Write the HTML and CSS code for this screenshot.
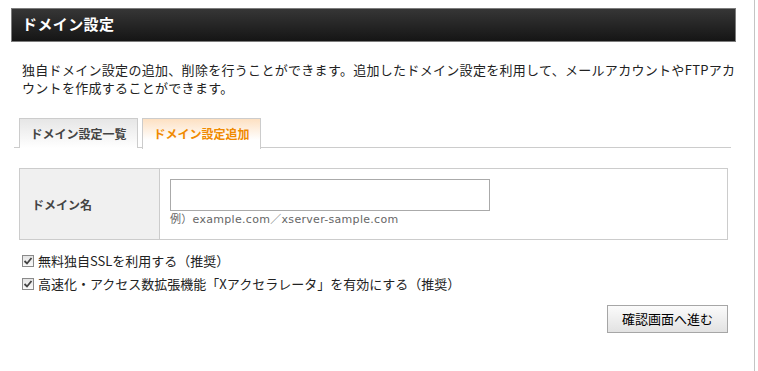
FILE: index.html
```html
<!DOCTYPE html>
<html lang="ja">
<head>
<meta charset="utf-8">
<title>ドメイン設定</title>
<link rel="stylesheet" href="styles.css">
</head>
<body>
<div class="page">
  <h1 class="title">ドメイン設定</h1>
  <p class="desc">独自ドメイン設定の追加、削除を行うことができます。追加したドメイン設定を利用して、メールアカウントやFTPアカウントを作成することができます。</p>
  <div class="tabs">
    <div class="tab">ドメイン設定一覧</div>
    <div class="tab active">ドメイン設定追加</div>
  </div>
  <div class="form">
    <div class="label">ドメイン名</div>
    <div class="field">
      <div class="input"></div>
      <div class="help">例）example.com／xserver-sample.com</div>
    </div>
  </div>
  <div class="checks">
    <div class="check"><span class="box"><svg width="10" height="10" viewBox="0 0 10 10"><path d="M1.5 5 L4 7.5 L8.5 2" fill="none" stroke="#444" stroke-width="1.8"/></svg></span>無料独自SSLを利用する（推奨）</div>
    <div class="check"><span class="box"><svg width="10" height="10" viewBox="0 0 10 10"><path d="M1.5 5 L4 7.5 L8.5 2" fill="none" stroke="#444" stroke-width="1.8"/></svg></span>高速化・アクセス数拡張機能「Xアクセラレータ」を有効にする（推奨）</div>
  </div>
  <div class="actions">
    <button class="btn">確認画面へ進む</button>
  </div>
  <div class="rule"></div>
</div>
</body>
</html>
```
FILE: styles.css
```css
html, body {
  margin: 0;
  padding: 0;
  background: #fff;
}
body {
  font-family: "Noto Sans CJK JP", "Liberation Sans", sans-serif;
  color: #333;
}
.page {
  width: 755px;
  height: 371px;
  box-sizing: border-box;
  border-right: 1px solid #c4c4c4;
  padding-top: 8px;
  overflow: hidden;
}
.title {
  margin: 0 0 0 11px;
  width: 725px;
  height: 34px;
  box-sizing: border-box;
  border: 1px solid #7c7c7c;
  background: linear-gradient(#363636, #151515);
  color: #fff;
  font-size: 15px;
  font-weight: bold;
  line-height: 30px;
  padding-left: 10px;
  letter-spacing: 0.4px;
}
.desc {
  margin: 19px 0 0 22px;
  width: 715px;
  font-size: 13px;
  line-height: 18px;
  letter-spacing: 0.3px;
  color: #222;
}
.tabs {
  margin: 21px 0 0 14px;
  width: 717px;
  height: 30px;
  box-sizing: border-box;
  border-bottom: 1px solid #ccc;
  padding-left: 5px;
  display: flex;
  gap: 4px;
}
.tab {
  width: 119px;
  height: 30px;
  box-sizing: border-box;
  border: 1px solid #ccc;
  border-bottom: none;
  background: linear-gradient(#e6e6e6, #fff);
  font-size: 12px;
  font-weight: bold;
  color: #444;
  text-align: center;
  line-height: 29px;
}
.tab.active {
  height: 31px;
  background: linear-gradient(#fde0c2, #fff 70%);
  color: #f08a00;
}
.form {
  margin: 20px 0 0 19px;
  width: 709px;
  height: 72px;
  box-sizing: border-box;
  border: 1px solid #ccc;
  display: flex;
}
.label {
  width: 140px;
  box-sizing: border-box;
  border-right: 1px solid #ccc;
  background: #f0f0f0;
  font-size: 12px;
  font-weight: bold;
  color: #444;
  padding-left: 12px;
  display: flex;
  align-items: center;
}
.field {
  padding: 10px 0 0 10px;
}
.input {
  width: 320px;
  height: 32px;
  box-sizing: border-box;
  border: 1px solid #aaa;
  background: #fff;
}
.help {
  margin-top: 1px;
  font-family: "DejaVu Sans", "Noto Sans CJK JP", sans-serif;
  font-size: 11px;
  line-height: 16px;
  letter-spacing: 0.3px;
  color: #666;
}
.checks {
  margin: 9px 0 0 22px;
}
.check {
  display: flex;
  align-items: center;
  height: 23px;
  font-size: 13px;
  color: #222;
}
.box {
  width: 12px;
  height: 12px;
  box-sizing: border-box;
  border: 1px solid #8a8a8a;
  background: linear-gradient(#e4e4e4, #fafafa);
  margin-right: 4px;
  display: flex;
  align-items: center;
  justify-content: center;
}
.box svg {
  display: block;
}
.actions {
  width: 728px;
  margin-top: 10px;
  display: flex;
  justify-content: flex-end;
}
.btn {
  width: 121px;
  height: 28px;
  box-sizing: border-box;
  border: 1px solid #a6a6a6;
  border-radius: 0;
  background: linear-gradient(#fbfbfb, #e2e2e2);
  font-family: "Noto Sans CJK JP", sans-serif;
  font-size: 13px;
  color: #000;
  padding: 0;
  line-height: 24px;
}
.rule {
  margin: 38px 0 0 19px;
  width: 707px;
  height: 1px;
  background: #ccc;
}
```
